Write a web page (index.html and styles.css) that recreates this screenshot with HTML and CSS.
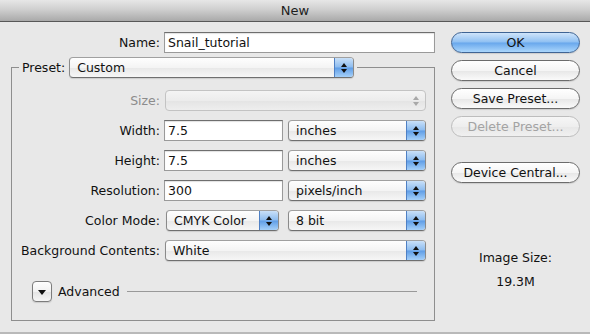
FILE: index.html
```html
<!DOCTYPE html>
<html lang="en">
<head>
    <meta charset="UTF-8">
    <title>New</title>
    <link rel="stylesheet" href="styles.css">
</head>
<body>
    <div class="dialog">
        <div class="titlebar">New</div>

        <div class="dialog-body">
            <div class="main">
                <div class="row name-row">
                    <span class="label">Name:</span>
                    <div class="field name-field">Snail_tutorial</div>
                </div>

                <fieldset class="preset-group">
                    <legend class="preset-legend">
                        <span class="label">Preset:</span>
                        <div class="popup preset-popup">
                            <span class="popup-text">Custom</span>
                            <span class="arrows"></span>
                        </div>
                    </legend>

                    <div class="rows">
                        <div class="row">
                            <span class="label disabled">Size:</span>
                            <div class="popup wide disabled">
                                <span class="popup-text"></span>
                                <span class="arrows"></span>
                            </div>
                        </div>
                        <div class="row">
                            <span class="label">Width:</span>
                            <div class="field num-field">7.5</div>
                            <div class="popup unit">
                                <span class="popup-text">inches</span>
                                <span class="arrows"></span>
                            </div>
                        </div>
                        <div class="row">
                            <span class="label">Height:</span>
                            <div class="field num-field">7.5</div>
                            <div class="popup unit">
                                <span class="popup-text">inches</span>
                                <span class="arrows"></span>
                            </div>
                        </div>
                        <div class="row">
                            <span class="label">Resolution:</span>
                            <div class="field num-field">300</div>
                            <div class="popup unit">
                                <span class="popup-text">pixels/inch</span>
                                <span class="arrows"></span>
                            </div>
                        </div>
                        <div class="row">
                            <span class="label">Color Mode:</span>
                            <div class="popup mode">
                                <span class="popup-text">CMYK Color</span>
                                <span class="arrows"></span>
                            </div>
                            <div class="popup unit">
                                <span class="popup-text">8 bit</span>
                                <span class="arrows"></span>
                            </div>
                        </div>
                        <div class="row">
                            <span class="label">Background Contents:</span>
                            <div class="popup wide">
                                <span class="popup-text">White</span>
                                <span class="arrows"></span>
                            </div>
                        </div>
                    </div>

                    <div class="advanced">
                        <span class="disclosure"></span>
                        <span class="advanced-label">Advanced</span>
                        <span class="advanced-line"></span>
                    </div>
                </fieldset>
            </div>

            <div class="side">
                <div class="buttons">
                    <div class="btn default">OK</div>
                    <div class="btn">Cancel</div>
                    <div class="btn">Save Preset...</div>
                    <div class="btn disabled">Delete Preset...</div>
                </div>
                <div class="btn device-btn">Device Central...</div>

                <div class="image-size">
                    <span>Image Size:</span>
                    <span>19.3M</span>
                </div>
            </div>
        </div>
    </div>
</body>
</html>
```

FILE: styles.css
```css
* {
    margin: 0;
    padding: 0;
    box-sizing: border-box;
}

body {
    font-family: 'DejaVu Sans', Verdana, sans-serif;
    font-size: 12.5px;
    color: #111;
    background: #e8e8e8;
}

.dialog {
    width: 590px;
    height: 334px;
    background: #e8e8e8;
    border-bottom: 2px solid #b9b9b9;
    overflow: hidden;
}

.titlebar {
    height: 22px;
    line-height: 21px;
    text-align: center;
    font-size: 13px;
    color: #1e1e1e;
    background: linear-gradient(#e7e7e7, #cfcfcf 45%, #a9a9a9);
    border-bottom: 1px solid #585858;
}

.dialog-body {
    display: flex;
}

.main {
    width: 435px;
}

/* form rows */

.row {
    display: grid;
    grid-template-columns: 148px max-content max-content;
    justify-content: start;
    column-gap: 4px;
    align-items: center;
    height: 21px;
}

.name-row {
    grid-template-columns: 160px 271px;
    margin-top: 10px;
}

.label {
    text-align: right;
    white-space: nowrap;
}

.label.disabled {
    color: #8c8c8c;
}

.field {
    height: 21px;
    line-height: 20px;
    padding-left: 3px;
    background: #fff;
    border: 1px solid #9a9a9a;
    border-top-color: #6e6e6e;
    box-shadow: inset 0 1px 1px rgba(0, 0, 0, 0.12);
}

.num-field {
    width: 119px;
    margin-right: 1px;
}

/* preset group box */

.preset-group {
    margin: 4px 0 0 11px;
    width: 424px;
    border: 1px solid #8e8e8e;
    padding: 0 0 18px 0;
}

.preset-legend {
    display: flex;
    align-items: center;
    gap: 4px;
    margin-left: 7px;
    padding: 0 3px;
}

.rows {
    display: flex;
    flex-direction: column;
    gap: 9px;
    margin-top: 12px;
}

/* popup menus */

.popup {
    display: flex;
    height: 21px;
    border: 1px solid #8a8a8a;
    border-top-color: #a0a0a0;
    border-bottom-color: #6f6f6f;
    border-radius: 4px;
    background: linear-gradient(#fefefe, #f4f4f4 50%, #e8e8e8 52%, #f6f6f6);
    box-shadow: 0 1px 1px rgba(0, 0, 0, 0.12);
    overflow: hidden;
}

.popup-text {
    flex: 1;
    line-height: 19px;
    padding-left: 7px;
    white-space: nowrap;
}

.arrows {
    width: 19px;
    display: flex;
    flex-direction: column;
    align-items: center;
    justify-content: center;
    gap: 2px;
    border-left: 1px solid #4f80c4;
    background: linear-gradient(#c9e0f8, #8dbcef 48%, #5f9de6 52%, #a5d0f9);
}

.arrows::before,
.arrows::after {
    content: '';
    border-left: 3px solid transparent;
    border-right: 3px solid transparent;
}

.arrows::before {
    border-bottom: 4px solid #111;
}

.arrows::after {
    border-top: 4px solid #111;
}

.preset-popup {
    width: 285px;
}

.wide {
    width: 261px;
    margin-left: 1px;
}

.unit {
    width: 138px;
}

.mode {
    width: 113px;
    margin-left: 2px;
    margin-right: 5px;
}

.popup.disabled {
    border-color: #c3c3c3;
    background: linear-gradient(#f4f4f4, #ececec 50%, #e4e4e4 52%, #eeeeee);
    box-shadow: none;
}

.popup.disabled .arrows {
    border-left: none;
    background: transparent;
}

.popup.disabled .arrows::before {
    border-bottom-color: #a8a8a8;
}

.popup.disabled .arrows::after {
    border-top-color: #a8a8a8;
}

/* advanced disclosure */

.advanced {
    display: flex;
    align-items: center;
    margin-top: 20px;
    padding-left: 20px;
    padding-right: 17px;
}

.disclosure {
    width: 20px;
    height: 21px;
    display: flex;
    align-items: center;
    justify-content: center;
    border: 1px solid #7c7c7c;
    border-radius: 4px;
    background: linear-gradient(#fefefe, #f2f2f2 50%, #e4e4e4 52%, #f6f6f6);
    box-shadow: 0 1px 1px rgba(0, 0, 0, 0.12);
}

.disclosure::before {
    content: '';
    border-left: 4px solid transparent;
    border-right: 4px solid transparent;
    border-top: 5px solid #111;
    margin-top: 1px;
}

.advanced-label {
    margin-left: 6px;
}

.advanced-line {
    flex: 1;
    height: 1px;
    margin-left: 7px;
    background: #999;
}

/* right column */

.side {
    width: 129px;
    margin-left: 16px;
    display: flex;
    flex-direction: column;
}

.buttons {
    display: flex;
    flex-direction: column;
    gap: 7px;
    margin-top: 10px;
}

.btn {
    height: 21px;
    line-height: 19px;
    text-align: center;
    border: 1px solid #6c6c6c;
    border-radius: 11px;
    background: linear-gradient(#ffffff, #f5f5f5 50%, #e7e7e7 52%, #fafafa);
    box-shadow: 0 1px 1px rgba(0, 0, 0, 0.12);
}

.btn.default {
    border-color: #3f6494;
    background: linear-gradient(#cfe4fa, #8fc0f2 48%, #68a7ec 52%, #aad6fc);
}

.btn.disabled {
    color: #a3a3a3;
    border-color: #bdbdbd;
    background: linear-gradient(#f6f6f6, #eeeeee 50%, #e7e7e7 52%, #f0f0f0);
    box-shadow: none;
}

.device-btn {
    margin-top: 25px;
}

.image-size {
    display: flex;
    flex-direction: column;
    align-items: center;
    gap: 9px;
    margin-top: 67px;
    line-height: 15px;
}
```
